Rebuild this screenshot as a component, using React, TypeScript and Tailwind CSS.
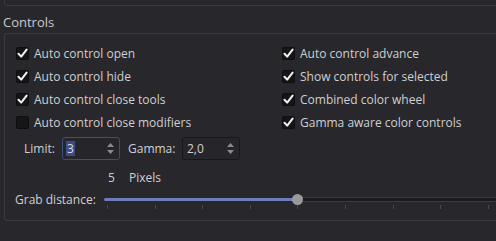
import React from "react";

const font = { fontFamily: '"Open Sans", "Noto Sans", sans-serif' };

function Check({ checked, label }: { checked: boolean; label: string }) {
  return (
    <div className="flex h-[23px] items-center">
      <div className="flex h-[13px] w-[13px] items-center justify-center rounded-[2px] border border-[#0e0e10] bg-[#151518]">
        {checked && (
          <svg width="11" height="11" viewBox="0 0 11 11">
            <path d="M1.5 5.8 L4.2 8.6 L9.6 1.6" fill="none" stroke="#f2f2f2" strokeWidth="2" strokeLinecap="round" strokeLinejoin="round" />
          </svg>
        )}
      </div>
      <span className="ml-[5px] text-[12px] leading-none text-[#cfcfd2]">{label}</span>
    </div>
  );
}

function Spin({ value, focused }: { value: string; focused?: boolean }) {
  return (
    <div
      className={
        focused
          ? "flex h-[23px] w-[58px] items-center rounded-[3px] border border-[#3f4e82] bg-[#26252a] pl-[3px] pr-[3px]"
          : "flex h-[23px] w-[58px] items-center rounded-[3px] border border-[#18171b] bg-[#26252a] pl-[3px] pr-[3px]"
      }
    >
      <span
        className={
          focused
            ? "bg-[#3d4c86] px-px text-[12px] leading-[15px] text-[#dcdcdf]"
            : "px-px text-[12px] leading-[15px] text-[#cfcfd2]"
        }
      >
        {value}
      </span>
      <div className="flex-1" />
      <svg width="9" height="15" viewBox="0 0 9 15" className="mr-[1px]">
        <path d="M1 6 L4.5 2 L8 6 Z" fill="#8c8c90" />
        <path d="M1 9 L4.5 13 L8 9 Z" fill="#8c8c90" />
      </svg>
    </div>
  );
}

export default function App() {
  const ticks = [107, 155, 202, 250, 297, 345, 393, 440, 488];
  return (
    <div className="relative h-[241px] w-[496px] overflow-hidden bg-[#28272c]" style={font}>
      <div className="ml-[4px] h-[6px] w-[600px] rounded-bl-[3px] border-b border-l border-[#3b3a40]" />
      <div className="ml-[3px] mt-[6px] h-[20px] text-[13px] leading-[20px] text-[#c9c9cc]">Controls</div>
      <div className="ml-[4px] mt-[1px] h-[188px] w-[600px] rounded-l-[3px] border-b border-l border-t border-[#3b3a40] pl-[11px] pt-[8px]">
        <div className="flex">
          <div className="flex w-[266px] flex-col">
            <Check checked label="Auto control open" />
            <Check checked label="Auto control hide" />
            <Check checked label="Auto control close tools" />
            <Check checked={false} label="Auto control close modifiers" />
          </div>
          <div className="flex flex-col">
            <Check checked label="Auto control advance" />
            <Check checked label="Show controls for selected" />
            <Check checked label="Combined color wheel" />
            <Check checked label="Gamma aware color controls" />
          </div>
        </div>
        <div className="mt-[3px] flex h-[23px] items-center">
          <span className="ml-[8px] w-[38px] text-[12px] text-[#cfcfd2]">Limit:</span>
          <Spin value="3" focused />
          <span className="ml-[8px] w-[54px] text-[12px] text-[#cfcfd2]">Gamma:</span>
          <Spin value="2,0" />
        </div>
        <div className="mt-[7px] flex h-[22px] items-center">
          <span className="ml-[92px] w-[21px] text-[12px] text-[#cfcfd2]">5</span>
          <span className="text-[12px] text-[#cfcfd2]">Pixels</span>
        </div>
        <div className="relative flex h-[22px] items-center">
          <span className="-ml-[1px] w-[89px] text-[12px] text-[#cfcfd2]">Grab distance:</span>
          <div className="relative h-[22px] flex-1">
            <div className="absolute left-0 top-[9px] h-[3px] w-[194px] rounded-l-[2px] bg-[#6e7cbc]" />
            <div className="absolute left-[194px] top-[8px] h-[5px] w-[400px] border-y border-[#3a393f] bg-[#1c1b1f]" />
            <div className="absolute left-[188px] top-[5px] h-[11px] w-[11px] rounded-full bg-[#9a9a9d]" />
          </div>
        </div>
      </div>
      {ticks.map((x) => (
        <div key={x} className="absolute top-[205px] h-[4px] w-px bg-[#48474d]" style={{ left: x }} />
      ))}
    </div>
  );
}
